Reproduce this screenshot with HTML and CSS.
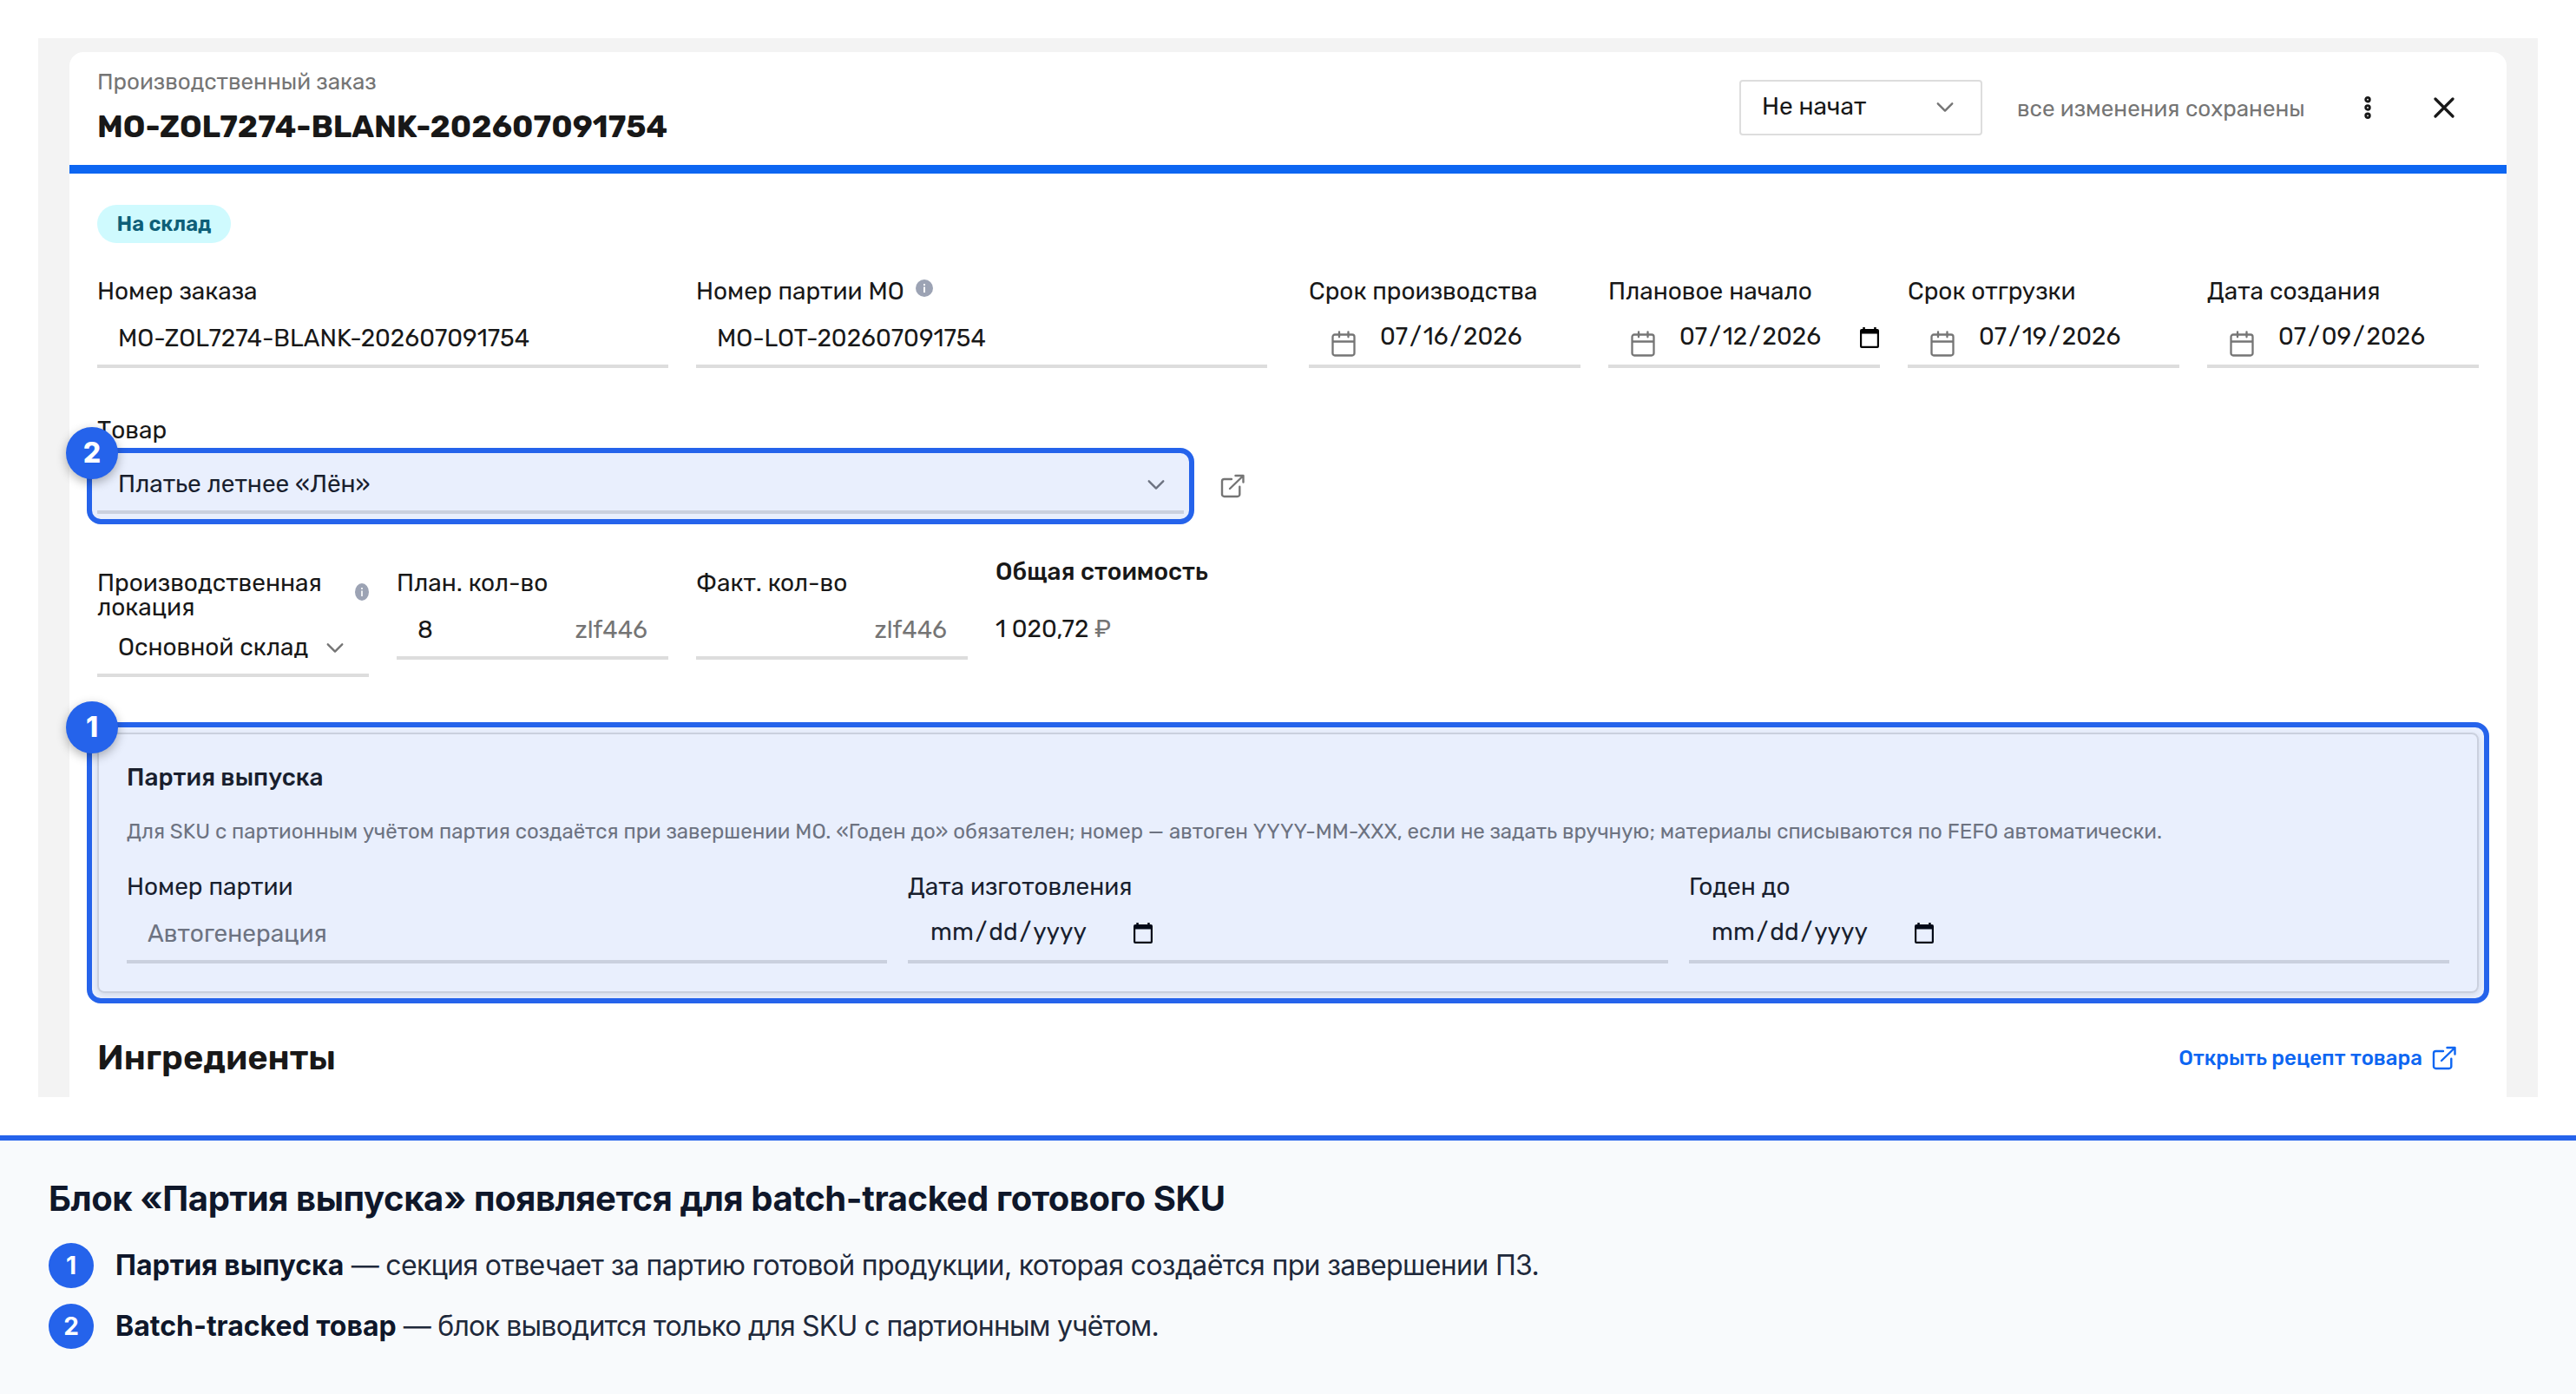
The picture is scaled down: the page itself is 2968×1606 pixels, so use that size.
FILE: index.html
```html
<!doctype html>
<html lang="ru">
<head>
    <meta charset="UTF-8">
    <meta name="viewport" content="width=device-width, initial-scale=1.0">
    <title>Производственный заказ</title>
    <link rel="stylesheet" href="styles.css">
</head>
<body>
<!-- icons -->
<svg class="sprite" xmlns="http://www.w3.org/2000/svg">
    <symbol id="i-chevron" viewBox="0 0 24 24">
        <path d="M3 8l9 9 9-9" fill="none" stroke="currentColor" stroke-width="2.6" stroke-linecap="round" stroke-linejoin="round"/>
    </symbol>
    <symbol id="i-calendar" viewBox="0 0 28 30">
        <path d="M4 4.500h20a2.500 2.500 0 0 1 2.500 2.500v19a2.500 2.500 0 0 1-2.500 2.500H4A2.500 2.500 0 0 1 1.500 26V7A2.500 2.500 0 0 1 4 4.500zM1.500 12.500h25M9 1.300v6M19.500 1.300v6" fill="none" stroke="currentColor" stroke-width="2.300" stroke-linecap="round"/>
    </symbol>
    <symbol id="i-picker" viewBox="0 0 22 24">
        <path d="M3.300 0h2.500v2h10.400V0h2.500v2H20a2 2 0 0 1 2 2v18a2 2 0 0 1-2 2H2a2 2 0 0 1-2-2V4a2 2 0 0 1 2-2h1.300zM2.200 7.500v14.300h17.600V7.500z" fill="currentColor" fill-rule="evenodd"/>
    </symbol>
    <symbol id="i-link" viewBox="0 0 28 28">
        <path d="M13 6H4.500A2.500 2.500 0 0 0 2 8.500v15A2.500 2.500 0 0 0 4.500 26h15.300a2.500 2.500 0 0 0 2.500-2.500v-8.800M17.500 2h9v7.500M26 2.500L11 17" fill="none" stroke="currentColor" stroke-width="2.400" stroke-linecap="round" stroke-linejoin="round"/>
    </symbol>
    <symbol id="i-info" viewBox="0 0 20 20" preserveAspectRatio="none">
        <circle cx="10" cy="10" r="10" fill="#9ca3b4"/>
        <path d="M9 5h2v2H9zM9 8.500h2V15H9z" fill="#fff"/>
    </symbol>
</svg>

<main class="shot">
    <div class="card">
        <header class="header">
            <div class="heading">
                <p class="kind">Производственный заказ</p>
                <h1 class="title">MO-ZOL7274-BLANK-202607091754</h1>
            </div>
            <div class="status"><span>Не начат</span><svg class="chevron"><use href="#i-chevron"/></svg></div>
            <span class="saved">все изменения сохранены</span>
            <svg class="dots" viewBox="0 0 8 28"><circle cx="4" cy="4.700" r="2.300"/><circle cx="4" cy="14" r="2.300"/><circle cx="4" cy="23.300" r="2.300"/></svg>
            <svg class="close" viewBox="0 0 24 24"><path d="M2 2l20 20M22 2L2 22"/></svg>
        </header>

        <div class="body">
            <span class="tag">На склад</span>

            <div class="row row-main">
                <div class="field">
                    <label>Номер заказа</label>
                    <div class="control">MO-ZOL7274-BLANK-202607091754</div>
                </div>
                <div class="field">
                    <label>Номер партии MO<svg class="info"><use href="#i-info"/></svg></label>
                    <div class="control">MO-LOT-202607091754</div>
                </div>
                <div class="dates">
                    <div class="field">
                        <label>Срок производства</label>
                        <div class="control date"><svg class="cal"><use href="#i-calendar"/></svg><span>07<i>/</i>16<i>/</i>2026</span></div>
                    </div>
                    <div class="field">
                        <label>Плановое начало</label>
                        <div class="control date"><svg class="cal"><use href="#i-calendar"/></svg><span>07<i>/</i>12<i>/</i>2026</span><svg class="picker"><use href="#i-picker"/></svg></div>
                    </div>
                    <div class="field">
                        <label>Срок отгрузки</label>
                        <div class="control date"><svg class="cal"><use href="#i-calendar"/></svg><span>07<i>/</i>19<i>/</i>2026</span></div>
                    </div>
                    <div class="field">
                        <label>Дата создания</label>
                        <div class="control date"><svg class="cal"><use href="#i-calendar"/></svg><span>07<i>/</i>09<i>/</i>2026</span></div>
                    </div>
                </div>
            </div>

            <div class="row row-product">
                <div class="field product">
                    <label>Товар</label>
                    <div class="control select">Платье летнее «Лён»<svg class="chevron"><use href="#i-chevron"/></svg>
                        <div class="mark"><span class="pin">2</span></div>
                    </div>
                </div>
                <svg class="link-icon"><use href="#i-link"/></svg>
            </div>

            <div class="row row-qty">
                <div class="field location">
                    <label><span>Производственная локация</span><svg class="info"><use href="#i-info"/></svg></label>
                    <div class="control select">Основной склад<svg class="chevron"><use href="#i-chevron"/></svg></div>
                </div>
                <div class="field">
                    <label>План. кол-во</label>
                    <div class="control unit"><span>8</span><span class="muted">zlf446</span></div>
                </div>
                <div class="field">
                    <label>Факт. кол-во</label>
                    <div class="control unit"><span></span><span class="muted">zlf446</span></div>
                </div>
                <div class="cost">
                    <p class="cost-label">Общая стоимость</p>
                    <p class="cost-value">1&nbsp;020,72 <span class="muted">₽</span></p>
                </div>
            </div>

            <section class="batch">
                <h2 class="batch-title">Партия выпуска</h2>
                <p class="batch-hint">Для SKU с партионным учётом партия создаётся при завершении МО. «Годен до» обязателен; номер — автоген YYYY-MM-XXX, если не задать вручную; материалы списываются по FEFO автоматически.</p>
                <div class="batch-fields">
                    <div class="field">
                        <label>Номер партии</label>
                        <div class="control muted">Автогенерация</div>
                    </div>
                    <div class="field">
                        <label>Дата изготовления</label>
                        <div class="control empty"><span>mm<i>/</i>dd<i>/</i>yyyy</span><svg class="picker"><use href="#i-picker"/></svg></div>
                    </div>
                    <div class="field">
                        <label>Годен до</label>
                        <div class="control empty"><span>mm<i>/</i>dd<i>/</i>yyyy</span><svg class="picker"><use href="#i-picker"/></svg></div>
                    </div>
                </div>
                <div class="mark"><span class="pin">1</span></div>
            </section>

            <div class="ingredients">
                <h2 class="ingredients-title">Ингредиенты</h2>
                <a class="recipe" href="#"><span>Открыть рецепт товара</span><svg class="link-icon"><use href="#i-link"/></svg></a>
            </div>
        </div>
    </div>
</main>

<footer class="legend">
    <h2 class="legend-title">Блок «Партия выпуска» появляется для batch-tracked готового SKU</h2>
    <ol class="legend-list">
        <li><span class="num">1</span><p><b>Партия выпуска</b> — секция отвечает за партию готовой продукции, которая создаётся при завершении ПЗ.</p></li>
        <li><span class="num">2</span><p><b>Batch-tracked товар</b> — блок выводится только для SKU с партионным учётом.</p></li>
    </ol>
</footer>
</body>
</html>
```
FILE: styles.css
```css
* {
    margin: 0;
    padding: 0;
    box-sizing: border-box;
}

body {
    background: #fff;
    color: #181818;
    font-family: Rubik, Roboto, "Noto Sans", sans-serif;
    font-size: 28px;
    line-height: 28px;
}

ol {
    list-style: none;
}

svg {
    display: block;
    flex: none;
}

.sprite {
    display: none;
}

.muted {
    color: #757575;
}

.shot {
    height: 1220px;
    margin: 44px 44px 0;
    padding: 16px 36px 0;
    background: #f3f3f3;
    overflow: hidden;
}

.card {
    height: 1204px;
    border-radius: 16px 16px 0 0;
    background: #fff;
}

/* header */
.header {
    display: flex;
    align-items: center;
    height: 140px;
    padding: 0 60px 2px 32px;
    border-bottom: 10px solid #0d66f2;
}

.heading {
    flex: 1;
    padding-bottom: 3px;
}

.kind {
    color: #757575;
    font-size: 26px;
    line-height: 32px;
}

.title {
    margin-top: 14px;
    font-size: 36px;
    font-weight: 700;
    line-height: 42px;
}

.status {
    display: flex;
    align-items: center;
    justify-content: space-between;
    width: 280px;
    height: 64px;
    margin-right: 40px;
    padding: 0 30px 2px 24px;
    border: 2px solid #ddd;
    border-radius: 4px;
}

.saved {
    width: 332px;
    padding-top: 3px;
    color: #757575;
    font-size: 26px;
    white-space: nowrap;
}

.chevron {
    width: 22px;
    height: 22px;
    color: #757575;
}

.dots {
    width: 8px;
    height: 28px;
    margin-left: 68px;
    fill: none;
    stroke: #181818;
    stroke-width: 2.800;
}

.close {
    width: 24px;
    height: 24px;
    margin-left: 72px;
    fill: none;
    stroke: #181818;
    stroke-width: 3.200;
    stroke-linecap: round;
}

/* form */
.body {
    padding: 36px 32px 0;
}

.tag {
    display: block;
    width: 154px;
    height: 44px;
    border-radius: 22px;
    background: #cffafe;
    color: #0e5f78;
    font-size: 24px;
    font-weight: 600;
    line-height: 44px;
    text-align: center;
}

.row {
    display: flex;
}

.field label {
    display: flex;
    height: 28px;
    margin: -2px 0 10px;
    white-space: nowrap;
}

.control {
    position: relative;
    display: flex;
    height: 64px;
    padding: 16px 24px 0;
    border-bottom: 4px solid #ddd;
    white-space: nowrap;
}

/* date separators */
.control i {
    padding: 0 2px;
    font-style: normal;
}

.info {
    width: 20px;
    height: 20px;
    margin-left: 13px;
}

.row-main {
    gap: 32px;
    margin-top: 44px;
}

.row-main > .field {
    width: 658px;
}

.dates {
    display: grid;
    flex: 1;
    grid-template-columns: repeat(4, 1fr);
    gap: 32px;
    margin-left: 16px;
}

.date {
    padding: 14px 1px 0 26px;
}

.cal {
    width: 28px;
    height: 30px;
    margin: 7px 28px 0 0;
    color: #757575;
}

.picker {
    width: 22px;
    height: 24px;
    margin: 3px 0 0 auto;
    color: #000;
}

.row-product {
    margin-top: 60px;
}

.product {
    width: 1252px;
}

.product label {
    margin-bottom: 18px;
}

.select {
    justify-content: space-between;
}

.select .chevron {
    margin: 3px -3px 0 0;
}

.link-icon {
    width: 28px;
    height: 28px;
}

.row-product .link-icon {
    margin: 62px 0 0 42px;
    color: #757575;
}

.row-qty {
    gap: 32px;
    margin-top: 68px;
}

.row-qty .field {
    width: 313px;
}

.field.location label {
    height: 56px;
    margin-bottom: 2px;
    justify-content: space-between;
    white-space: normal;
}

.location .info {
    width: 16px;
    margin: 14px 0 0;
}

.location .select .chevron {
    margin-right: 4px;
}

.unit {
    justify-content: space-between;
}

.cost-label {
    margin-top: -15px;
    font-weight: 500;
    white-space: nowrap;
}

.cost-value {
    margin-top: 38px;
}

/* batch section */
.batch {
    position: relative;
    height: 300px;
    margin-top: 64px;
    padding: 36px 32px 0;
    border: 2px solid #ddd;
    border-radius: 8px;
    box-shadow: 0 2px 6px rgba(0, 0, 0, .1);
}

.batch-title {
    font-size: 28px;
    font-weight: 500;
}

.batch-hint {
    margin-top: 34px;
    color: #757575;
    font-size: 24px;
    line-height: 28px;
    white-space: nowrap;
}

.batch-fields {
    display: grid;
    grid-template-columns: repeat(3, 1fr);
    gap: 24px;
    margin-top: 38px;
}

.empty {
    padding: 14px 26px 0;
}

.empty .picker {
    margin-left: 54px;
}

/* numbered highlight over a block */
.mark {
    position: absolute;
    inset: -12px -12px -16px;
    border: 6px solid #2563eb;
    border-radius: 16px;
    background: rgba(37, 99, 235, .1);
}

.batch .mark {
    inset: -14px;
}

.pin {
    position: absolute;
    top: -30px;
    left: -30px;
    width: 60px;
    height: 60px;
    border-radius: 50%;
    background: #2563eb;
    box-shadow: 0 4px 12px rgba(0, 0, 0, .3);
    color: #fff;
    font: 800 32px/60px Inter, sans-serif;
    text-align: center;
}

.ingredients {
    display: flex;
    align-items: center;
    justify-content: space-between;
    height: 60px;
    margin-top: 45px;
    padding-right: 26px;
}

.ingredients-title {
    font-size: 40px;
    font-weight: 600;
    line-height: 48px;
}

.recipe {
    display: flex;
    align-items: center;
    gap: 11px;
    color: #0d66f2;
    font-size: 24px;
    font-weight: 500;
    text-decoration: none;
}

/* legend */
.legend {
    height: 298px;
    margin-top: 44px;
    padding: 43px 56px 0;
    border-top: 6px solid #2563eb;
    background: #f8fafc;
    color: #1e293b;
    font: 32px/52px Inter, sans-serif;
}

.legend-title {
    color: #0f172a;
    font-size: 40px;
    font-weight: 700;
    line-height: 48px;
    letter-spacing: -.4px;
}

.legend li {
    display: flex;
    gap: 25px;
    margin-top: 18px;
    letter-spacing: -.78px;
}

.legend li:first-child {
    margin-top: 27px;
    letter-spacing: -.65px;
}

.legend b {
    color: #0f172a;
    font-weight: 700;
    letter-spacing: 0;
}

.num {
    width: 52px;
    height: 52px;
    border-radius: 50%;
    background: #2563eb;
    color: #fff;
    font-size: 28px;
    font-weight: 700;
    letter-spacing: 0;
    text-align: center;
}
```
